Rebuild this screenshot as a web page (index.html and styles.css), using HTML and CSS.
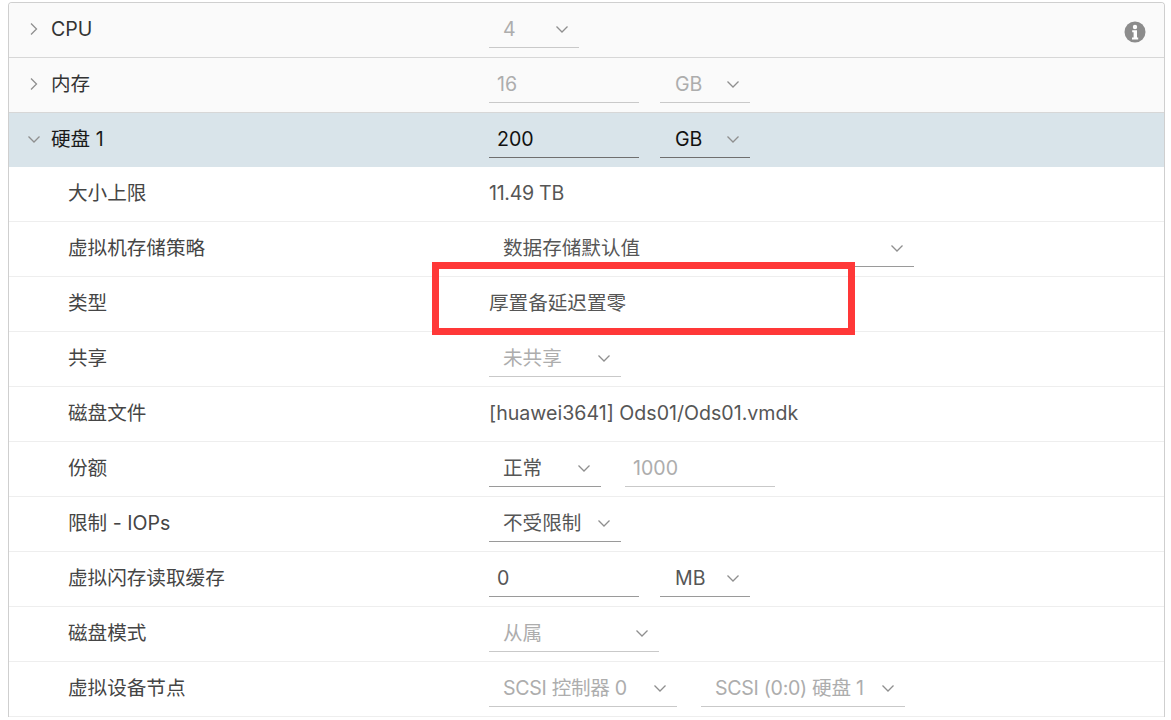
FILE: index.html
```html
<!DOCTYPE html>
<html lang="zh-CN">
<head>
<meta charset="utf-8">
<title>虚拟硬件</title>
<link rel="stylesheet" href="styles.css">
</head>
<body>
<svg class="sprite" width="0" height="0" aria-hidden="true">
  <symbol id="chev" viewBox="0 0 16 16"><path d="M2.5 5.5 8 11 13.5 5.5" fill="none" stroke="currentColor" stroke-width="1.3"/></symbol>
  <symbol id="chev-r" viewBox="0 0 16 16"><path d="M5 2.5 10.5 8 5 13.5" fill="none" stroke="currentColor" stroke-width="1.3"/></symbol>
</svg>
<main class="panel">
  <div class="row head">
    <div class="label"><svg class="tog"><use href="#chev-r"/></svg>CPU</div>
    <div class="value">
      <div class="ctl dis w90"><span>4</span><svg class="arrow"><use href="#chev"/></svg></div>
    </div>
    <svg class="info" viewBox="0 0 22 22"><circle cx="11" cy="11" r="10.5" fill="#8c8c8c"/><circle cx="11" cy="6" r="2.2" fill="#fff"/><path d="M8.2 9.2h4.8v7.2h1.2v2H8v-2h1.6v-5.2H8.2z" fill="#fff"/></svg>
  </div>
  <div class="row head">
    <div class="label"><svg class="tog"><use href="#chev-r"/></svg>内存</div>
    <div class="value">
      <div class="ctl dis input w150"><span>16</span></div>
      <div class="ctl dis unit w90 gap21"><span>GB</span><svg class="arrow"><use href="#chev"/></svg></div>
    </div>
  </div>
  <div class="row head open">
    <div class="label"><svg class="tog"><use href="#chev"/></svg>硬盘 1</div>
    <div class="value">
      <div class="ctl strong input w150"><span>200</span></div>
      <div class="ctl strong unit w90 gap21"><span>GB</span><svg class="arrow"><use href="#chev"/></svg></div>
    </div>
  </div>
  <div class="row sub">
    <div class="label">大小上限</div>
    <div class="value text tight">11.49 TB</div>
  </div>
  <div class="row sub">
    <div class="label">虚拟机存储策略</div>
    <div class="value"><div class="ctl w425"><span>数据存储默认值</span><svg class="arrow"><use href="#chev"/></svg></div></div>
  </div>
  <div class="row sub">
    <div class="label">类型</div>
    <div class="value text">厚置备延迟置零</div>
  </div>
  <div class="row sub">
    <div class="label">共享</div>
    <div class="value"><div class="ctl dis w132"><span>未共享</span><svg class="arrow"><use href="#chev"/></svg></div></div>
  </div>
  <div class="row sub">
    <div class="label">磁盘文件</div>
    <div class="value text">[huawei3641] Ods01/Ods01.vmdk</div>
  </div>
  <div class="row sub">
    <div class="label">份额</div>
    <div class="value">
      <div class="ctl w112"><span>正常</span><svg class="arrow"><use href="#chev"/></svg></div>
      <div class="ctl dis input w150 gap24"><span>1000</span></div>
    </div>
  </div>
  <div class="row sub">
    <div class="label">限制 - IOPs</div>
    <div class="value"><div class="ctl w132"><span>不受限制</span><svg class="arrow"><use href="#chev"/></svg></div></div>
  </div>
  <div class="row sub">
    <div class="label">虚拟闪存读取缓存</div>
    <div class="value">
      <div class="ctl input w150"><span>0</span></div>
      <div class="ctl unit w90 gap21"><span>MB</span><svg class="arrow"><use href="#chev"/></svg></div>
    </div>
  </div>
  <div class="row sub">
    <div class="label">磁盘模式</div>
    <div class="value"><div class="ctl dis w170"><span>从属</span><svg class="arrow"><use href="#chev"/></svg></div></div>
  </div>
  <div class="row sub">
    <div class="label">虚拟设备节点</div>
    <div class="value">
      <div class="ctl dis w188 tight"><span>SCSI 控制器 0</span><svg class="arrow"><use href="#chev"/></svg></div>
      <div class="ctl dis w204 gap24 tight"><span>SCSI (0:0) 硬盘 1</span><svg class="arrow"><use href="#chev"/></svg></div>
    </div>
  </div>
</main>
<div class="callout"></div>
</body>
</html>
```
FILE: styles.css
```css
* { box-sizing: border-box; }
html, body { height: 720px; overflow: hidden; }
body {
  margin: 0;
  padding: 2px 6px 0 8px;
  background: #fff;
  font-family: "Inter", "Noto Sans CJK SC", sans-serif;
  font-size: 19.6px;
  line-height: 24px;
  color: #565656;
}
.sprite { position: absolute; }
.panel {
  border: 1px solid #cfcfcf;
  border-bottom: 0;
  border-radius: 4px 4px 0 0;
  height: 715px;
  overflow: hidden;
}
.row {
  display: flex;
  align-items: flex-start;
  height: 55px;
  border-bottom: 1px solid #eeeeee;
  position: relative;
}
.head { background: #fafafa; border-bottom-color: #d7d7d7; color: #333; }
.open { background: #d9e4ea; border-bottom-color: #d9e4ea; color: #1a1a1a; height: 54px; }
.label {
  width: 480px;
  flex: none;
  display: flex;
  align-items: center;
  height: 52px;
}
.head .label { padding-left: 17px; }
.sub .label { padding-left: 59px; color: #454545; }
.tog { width: 16px; height: 16px; margin-right: 9px; color: #8f8f8f; flex: none; }
.value { display: flex; align-items: flex-start; height: 45px; }
.value.text { align-items: center; height: 52px; color: #565656; }
.ctl {
  height: 45px;
  border-bottom: 1px solid #9a9a9a;
  display: flex;
  align-items: center;
  justify-content: space-between;
  padding: 8px 9px 0 14px;
  color: #565656;
  white-space: nowrap;
  flex: none;
}
.ctl.input { padding-left: 8px; }
.ctl.unit { padding-left: 15px; }
.tight { letter-spacing: -0.3px; }
.dis { color: #adadad; border-bottom-color: #c9c9c9; }
.strong { color: #111; border-bottom-color: #6f6f6f; }
.arrow { width: 16px; height: 16px; color: #8f8f8f; flex: none; }
.w90 { width: 90px; }
.w112 { width: 112px; }
.w132 { width: 132px; }
.w150 { width: 150px; }
.w170 { width: 170px; }
.w188 { width: 188px; }
.w204 { width: 204px; }
.w425 { width: 425px; }
.gap21 { margin-left: 21px; }
.gap24 { margin-left: 24px; }
.info {
  position: absolute;
  width: 22px;
  height: 22px;
  left: 1115px;
  top: 18px;
}
.callout {
  position: absolute;
  left: 432px;
  top: 262px;
  width: 423px;
  height: 73px;
  border: 7px solid #ff3838;
}
```
